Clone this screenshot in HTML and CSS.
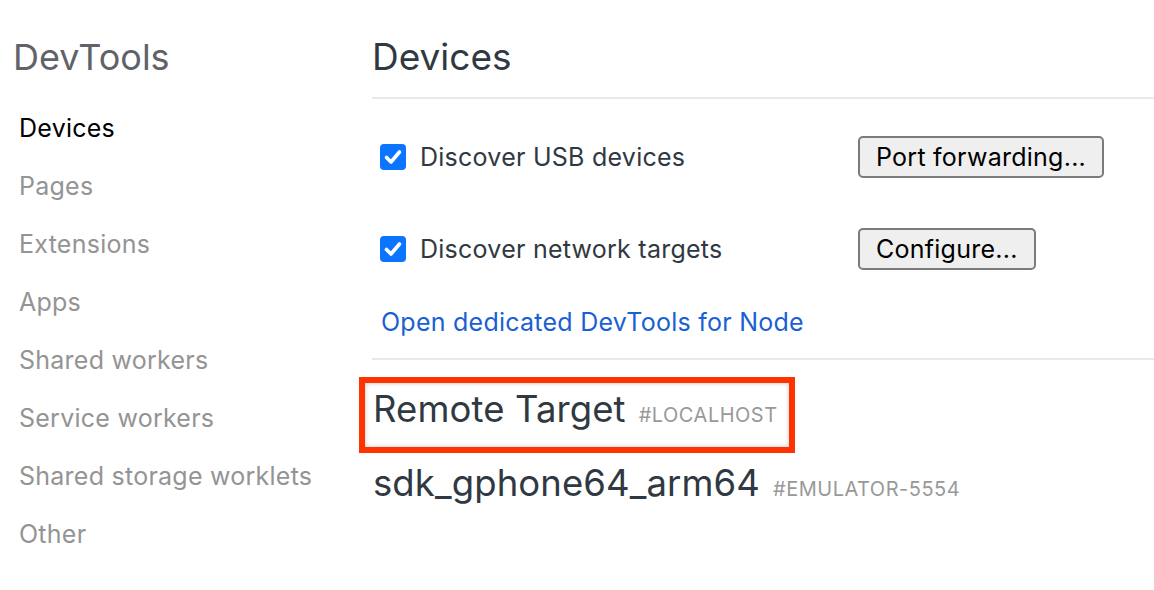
FILE: index.html
```html
<!DOCTYPE html>
<html>
<head>
<meta charset="utf-8">
<link rel="stylesheet" href="styles.css">
</head>
<body>
<div class="page">
  <nav class="sidebar">
    <div class="brand">DevTools</div>
    <ul class="nav">
      <li class="nav-item active">Devices</li>
      <li class="nav-item">Pages</li>
      <li class="nav-item">Extensions</li>
      <li class="nav-item">Apps</li>
      <li class="nav-item">Shared workers</li>
      <li class="nav-item">Service workers</li>
      <li class="nav-item">Shared storage worklets</li>
      <li class="nav-item">Other</li>
    </ul>
  </nav>
  <main class="main">
    <header class="main-header"><h1 class="title">Devices</h1></header>
    <section class="options">
      <div class="row">
        <label class="check-label">
          <span class="checkbox"><svg viewBox="0 0 26 26" width="26" height="26"><path d="M6.5 13.5 L11 18 L19.5 8" fill="none" stroke="#fff" stroke-width="3.6" stroke-linecap="round" stroke-linejoin="round"/></svg></span>
          <span>Discover USB devices</span>
        </label>
        <button class="btn">Port forwarding...</button>
      </div>
      <div class="row">
        <label class="check-label">
          <span class="checkbox"><svg viewBox="0 0 26 26" width="26" height="26"><path d="M6.5 13.5 L11 18 L19.5 8" fill="none" stroke="#fff" stroke-width="3.6" stroke-linecap="round" stroke-linejoin="round"/></svg></span>
          <span>Discover network targets</span>
        </label>
        <button class="btn">Configure...</button>
      </div>
      <a class="link" href="#">Open dedicated DevTools for Node</a>
    </section>
    <section class="targets">
      <div class="target highlighted"><span class="target-name">Remote Target</span><span class="target-id">#LOCALHOST</span></div>
      <div class="target"><span class="target-name">sdk_gphone64_arm64</span><span class="target-id">#EMULATOR-5554</span></div>
    </section>
  </main>
</div>
</body>
</html>
```
FILE: styles.css
```css
* { box-sizing: border-box; }
html, body { margin: 0; padding: 0; background: #fff; }
body {
  font-family: Inter, "Noto Sans", "Liberation Sans", sans-serif;
  color: #303942;
  overflow: hidden;
}
.page { display: flex; width: 1154px; height: 590px; }

.sidebar { width: 372px; flex: none; padding-left: 13px; }
.brand {
  font-size: 36px;
  line-height: 40px;
  padding-top: 37px;
  height: 99px;
  color: #5f6368;
}
.nav { list-style: none; margin: 0; padding: 0 0 0 6px; }
.nav-item {
  font-size: 25px;
  letter-spacing: 0.25px;
  height: 58px;
  line-height: 58px;
  color: #949494;
}
.nav-item.active { color: #000; }

.main { flex: 1; min-width: 0; }
.main-header {
  height: 99px;
  padding-top: 37px;
  border-bottom: 2px solid #e9e9e9;
}
.title {
  margin: 0;
  font-size: 37px;
  font-weight: normal;
  line-height: 40px;
}
.options {
  padding: 12px 0 21px 8px;
  border-bottom: 2px solid #e9e9e9;
}
.row { display: flex; align-items: center; height: 92px; }
.check-label {
  display: flex;
  align-items: center;
  width: 478px;
  font-size: 25px;
  letter-spacing: 0.25px;
  gap: 14px;
}
.checkbox {
  width: 26px;
  height: 26px;
  border-radius: 4px;
  background: #0b75ff;
  display: inline-flex;
}
.btn {
  font-family: inherit;
  font-size: 25px;
  letter-spacing: 0.25px;
  color: #000;
  height: 42px;
  padding: 0 16px;
  background: #efefef;
  border: 2px solid #7b7b7b;
  border-radius: 5px;
}
.link {
  display: block;
  margin-top: 12px;
  line-height: 30px;
  font-size: 25px;
  letter-spacing: 0.25px;
  color: #1a5fd3;
  text-decoration: none;
  padding-left: 1px;
}
.targets { padding: 24px 0 0 1px; display: flex; flex-direction: column; gap: 18px; }
.target {
  display: flex;
  align-items: baseline;
  gap: 13px;
  line-height: 50px;
  align-self: flex-start;
}
.target-name { font-size: 36.5px; letter-spacing: 0.1px; }
.target-id { font-size: 20px; color: #999; letter-spacing: 0.5px; }
.highlighted { position: relative; }
.highlighted::after {
  content: "";
  position: absolute;
  left: -14px;
  right: -17px;
  top: -7px;
  bottom: -13px;
  border: 6px solid #ff3300;
  box-shadow: inset 0 0 4px rgba(0,0,0,0.25);
}
```
